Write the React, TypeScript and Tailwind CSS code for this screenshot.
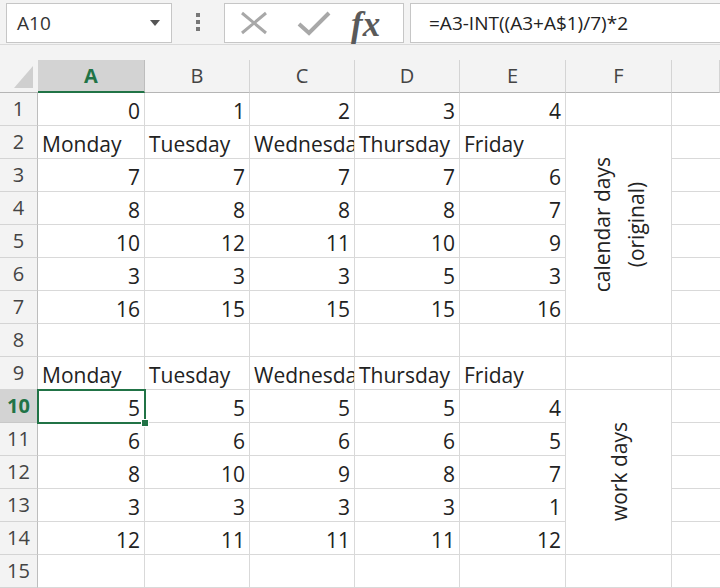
import React from "react";

const font = { fontFamily: '"Open Sans", "Noto Sans", sans-serif' };

type Cell = string | number | null;

const days = ["Monday", "Tuesday", "Wednesday", "Thursday", "Friday"];

const rows: Cell[][] = [
  [0, 1, 2, 3, 4],
  days,
  [7, 7, 7, 7, 6],
  [8, 8, 8, 8, 7],
  [10, 12, 11, 10, 9],
  [3, 3, 3, 5, 3],
  [16, 15, 15, 15, 16],
  [null, null, null, null, null],
  days,
  [5, 5, 5, 5, 4],
  [6, 6, 6, 6, 5],
  [8, 10, 9, 8, 7],
  [3, 3, 3, 3, 1],
  [12, 11, 11, 11, 12],
  [null, null, null, null, null],
];

const cols = ["A", "B", "C", "D", "E", "F", ""];

export default function App() {
  return (
    <div className="w-[720px] h-[588px] overflow-hidden bg-white text-[#222]" style={font}>
      {/* formula bar */}
      <div className="h-[45px] bg-[#f3f3f3] border-b border-[#dadada] flex items-start relative">
        <div className="ml-[6px] mt-[3px] w-[166px] h-[40px] bg-white border border-[#c6c6c6] flex items-center justify-between pl-[10px] pr-[10px]">
          <span className="text-[19px] text-[#333]">A10</span>
          <svg width="12" height="8" viewBox="0 0 12 8">
            <path d="M1 1 L11 1 L6 7 Z" fill="#555" />
          </svg>
        </div>
        <div className="w-[52px] h-[43px] flex flex-col items-center justify-center gap-[3px]">
          <div className="w-[4px] h-[4px] bg-[#777]" />
          <div className="w-[4px] h-[4px] bg-[#777]" />
          <div className="w-[4px] h-[4px] bg-[#777]" />
        </div>
        <div className="mt-[3px] w-[180px] h-[40px] bg-white border border-[#c6c6c6] flex items-center">
          <svg width="30" height="26" viewBox="0 0 30 26" className="ml-[14px]">
            <path d="M3 3 L27 23 M27 3 L3 23" stroke="#a8a8a8" strokeWidth="3" fill="none" />
          </svg>
          <svg width="34" height="26" viewBox="0 0 34 26" className="ml-[28px]">
            <path d="M2 14 L12 23 L32 3" stroke="#a8a8a8" strokeWidth="4" fill="none" />
          </svg>
          <span
            className="ml-[20px] mt-[2px] text-[35px] italic font-bold leading-none text-[#5a5a5a]"
            style={{ fontFamily: '"Liberation Serif", "DejaVu Serif", serif' }}
          >
            fx
          </span>
        </div>
        <div className="ml-[6px] mt-[3px] flex-1 h-[40px] bg-white border border-[#c6c6c6] border-r-0 flex items-center pl-[18px]">
          <span className="text-[19px] text-[#222]">=A3-INT((A3+A$1)/7)*2</span>
        </div>
      </div>
      <div className="h-[15px] bg-[#f3f3f3]" />
      {/* grid */}
      <div className="relative grid grid-cols-[38px_107px_105px_105px_105px_106px_106px_1fr] grid-rows-[33px_repeat(15,33px)]">
        {/* corner */}
        <div className="bg-[#f3f3f3] border-b border-[#b5b5b5] flex items-end justify-end pr-[5px] pb-[4px]">
          <svg width="19" height="22" viewBox="0 0 19 22">
            <path d="M0 22 L19 22 L19 0 Z" fill="#cfcfcf" />
          </svg>
        </div>
        {cols.map((c, i) =>
          c === "A" ? (
            <div
              key={"h" + i}
              className="bg-[#d3d3d3] border-b-2 border-[#217346] border-r border-r-[#bdbdbd] flex items-center justify-center text-[20px] font-bold text-[#217346]"
            >
              A
            </div>
          ) : (
            <div
              key={"h" + i}
              className="bg-[#f3f3f3] border-b border-[#b5b5b5] border-r border-r-[#d4d4d4] flex items-center justify-center text-[20px] text-[#444]"
            >
              {c}
            </div>
          )
        )}
        {rows.map((r, ri) => {
          const rowNum = ri + 1;
          const selRow = rowNum === 10;
          const cells: React.ReactNode[] = [];
          cells.push(
            <div
              key={"rh" + ri}
              className={
                selRow
                  ? "bg-[#d3d3d3] border-b border-[#c8c8c8] border-r border-r-[#bdbdbd] flex items-center justify-center text-[20px] font-bold text-[#217346]"
                  : "bg-[#f3f3f3] border-b border-[#d4d4d4] border-r border-r-[#bdbdbd] flex items-center justify-center text-[20px] text-[#444]"
              }
              style={{ gridRow: rowNum + 1, gridColumn: 1 }}
            >
              {rowNum}
            </div>
          );
          r.forEach((v, ci) => {
            const isNum = typeof v === "number";
            cells.push(
              <div
                key={"c" + ri + "-" + ci}
                className={
                  "border-b border-r border-[#d9d9d9] overflow-hidden whitespace-nowrap flex items-end text-[21px] leading-[27px] " +
                  (isNum ? "justify-end pr-[4px]" : "justify-start pl-[4px]")
                }
                style={{ gridRow: rowNum + 1, gridColumn: ci + 2 }}
              >
                {v === null ? "" : String(v)}
              </div>
            );
          });
          if (rowNum === 1 || rowNum === 8 || rowNum === 9 || rowNum === 15) {
            cells.push(
              <div
                key={"f" + ri}
                className="border-b border-r border-[#d9d9d9]"
                style={{ gridRow: rowNum + 1, gridColumn: 7 }}
              />
            );
          }
          cells.push(
            <div
              key={"g" + ri}
              className="border-b border-[#d9d9d9]"
              style={{ gridRow: rowNum + 1, gridColumn: 8 }}
            />
          );
          return cells;
        })}
        {/* merged F2:F7 */}
        <div
          className="border-b border-r border-[#d9d9d9] flex items-center justify-center"
          style={{ gridRow: "3 / 9", gridColumn: 7 }}
        >
          <div className="[writing-mode:vertical-rl] rotate-180 text-center text-[21px] leading-[34px]">
            calendar days
            <br />
            (original)
          </div>
        </div>
        {/* merged F10:F14 */}
        <div
          className="border-b border-r border-[#d9d9d9] flex items-center justify-center"
          style={{ gridRow: "11 / 16", gridColumn: 7 }}
        >
          <div className="[writing-mode:vertical-rl] rotate-180 text-center text-[21px] leading-[34px]">
            work days
          </div>
        </div>
        {/* selection */}
        <div className="absolute left-[37px] top-[329px] w-[109px] h-[35px] border-2 border-[#217346] pointer-events-none" />
        <div className="absolute left-[141px] top-[359px] w-[8px] h-[8px] bg-[#217346] border border-white" />
      </div>
    </div>
  );
}
